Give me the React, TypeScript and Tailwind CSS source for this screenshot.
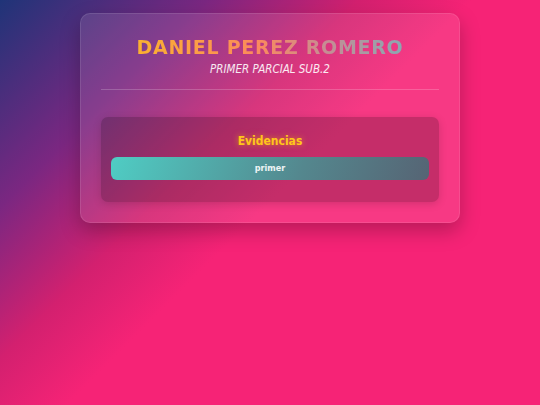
export default function App() {
  return (
    <div
      className="min-h-[405px] w-full pt-[13px] [font-family:'DejaVu_Sans_Condensed','DejaVu_Sans',sans-serif]"
      style={{ background: "linear-gradient(135deg, #1f3478 0%, #7b2781 22%, #d3206f 38%, #f62376 50%, #f62376 100%)" }}
    >
      <div className="mx-auto w-[380px] rounded-[10px] border border-white/10 bg-white/10 px-5 pt-[20px] pb-[20px] shadow-[0_8px_20px_rgba(0,0,0,0.25)]">
        <h1 className="text-center text-[19px] font-bold leading-[26px] tracking-[0.7px] [font-family:'DejaVu_Sans',sans-serif]">
          <span className="inline-block bg-[linear-gradient(90deg,#fbb130_0%,#fc8a5c_45%,#c88c92_70%,#8aa8b2_100%)] bg-clip-text text-transparent">DANIEL PEREZ ROMERO</span>
        </h1>
        <p className="mt-[2px] text-center text-[11.5px] italic leading-[14px] text-white/90">PRIMER PARCIAL SUB.2</p>
        <div className="mt-[13px] h-px bg-white/20" />
        <div className="mt-[27px] rounded-[7px] bg-black/20 px-[10px] pt-[16px] pb-[22px] shadow-[0_2px_8px_rgba(0,0,0,0.15)]">
          <h2 className="text-center text-[12px] font-bold leading-[16px] text-[#ffc61a] [text-shadow:0_0_6px_rgba(255,200,0,0.6)]">Evidencias</h2>
          <button
            className="mt-[8px] flex h-[23px] w-full items-center justify-center rounded-[6px] text-[9px] font-bold text-white/90"
            style={{ background: "linear-gradient(110deg, #4fcdc4 0%, #54878e 60%, #566474 100%)" }}
          >
            primer
          </button>
        </div>
      </div>
    </div>
  );
}
